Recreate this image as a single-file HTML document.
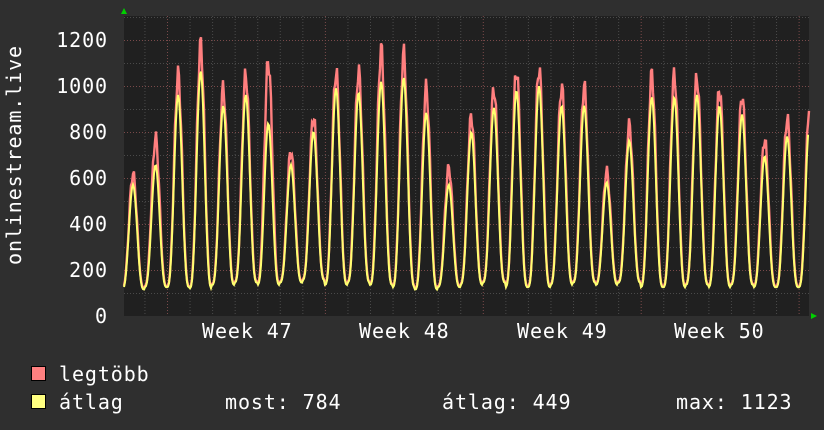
<!DOCTYPE html>
<html><head><meta charset="utf-8"><style>
html,body{margin:0;padding:0;background:#2f2f2f;}
body{width:824px;height:430px;overflow:hidden;position:relative;font-family:"DejaVu Sans Mono","Liberation Mono",monospace;color:#fff;}
.t{position:absolute;font-size:20px;line-height:20px;white-space:pre;letter-spacing:0.9px;}
.yl{position:absolute;right:716px;font-size:20px;line-height:20px;letter-spacing:0.9px;}
.sq{position:absolute;width:13px;height:13px;border:1px solid #000;}
</style></head><body>
<svg id="g" width="824" height="430" style="position:absolute;left:0;top:0">
<rect x="124" y="16" width="685" height="300" fill="#202020"/>
<g id="grid"></g>
<g id="data"></g>
<polygon points="121,14 127,14 124,8" fill="#00d000"/>
<polygon points="811,313 811,319 817,316" fill="#00d000"/>
</svg>
<div class="yl" style="top:30px">1200</div>
<div class="yl" style="top:76px">1000</div>
<div class="yl" style="top:122px">800</div>
<div class="yl" style="top:168px">600</div>
<div class="yl" style="top:214px">400</div>
<div class="yl" style="top:260px">200</div>
<div class="yl" style="top:306px">0</div>
<div class="t" style="top:155px;transform:rotate(-90deg);transform-origin:center;left:-86px;width:200px;text-align:center">onlinestream.live</div>
<div class="t" style="left:202px;top:321px">Week 47</div>
<div class="t" style="left:359px;top:321px">Week 48</div>
<div class="t" style="left:517px;top:321px">Week 49</div>
<div class="t" style="left:674px;top:321px">Week 50</div>
<div class="sq" style="left:31px;top:366px;background:#ff8080"></div>
<div class="sq" style="left:31px;top:394px;background:#ffff80"></div>
<div class="t" style="left:59px;top:364px">legtöbb</div>
<div class="t" style="left:59px;top:392px">átlag</div>
<div class="t" style="left:225px;top:392px">most: 784</div>
<div class="t" style="left:442px;top:392px">átlag: 449</div>
<div class="t" style="left:676px;top:392px">max: 1123</div>
<script>
var ns="http://www.w3.org/2000/svg";
function el(p,n,a){var e=document.createElementNS(ns,n);for(var k in a)e.setAttribute(k,a[k]);p.appendChild(e);return e;}
var G=document.getElementById("grid"),D=document.getElementById("data");
function Y(v){return 316-v*0.23;}
for(var v=100;v<=1300;v+=100){var maj=v%200==0;el(G,"line",{x1:124,x2:809,y1:Y(v)+.5,y2:Y(v)+.5,stroke:maj?"#7a4a4a":"#4a4a4a","stroke-dasharray":"1,2"});}
var dw=157.9/7;
for(var k=-1;k<40;k++){var x=167+dw*k;if(x<124||x>809)continue;var maj=((k%7)+7)%7==0;el(G,"line",{x1:x+.5,x2:x+.5,y1:16,y2:316,stroke:maj?"#7a4a4a":"#4a4a4a","stroke-dasharray":"1,2"});}
var peaks=[620,775,1050,1180,990,1050,1110,720,870,1065,1065,1160,1140,990,645,870,990,1070,1080,1000,1000,630,830,1050,1050,1040,990,960,770,860,930];
var avgp=[600,690,1010,1120,960,1010,880,690,840,1040,1020,1070,1090,930,600,840,950,1030,1050,960,960,610,800,1000,1000,1010,960,920,730,820,900];
var mins=[120,130,130,125,140,150,140,150,160,140,150,140,130,120,130,140,150,130,130,140,150,140,150,130,130,140,130,140,130,130,130];
var rp=[],yp=[];
for(var x=124;x<=809;x+=1){var t=(x-133)/dw;var i=Math.round(t);if(i<0)i=0;if(i>30)i=30;var ph=t-Math.round(t);
var f=Math.pow((1+Math.cos(2*Math.PI*ph))/2,1.6);var j=(Math.sin(x*1.7)*0.05);
var r=mins[i]+(peaks[i]-mins[i])*(f+j*f);var a=mins[i]-5+(avgp[i]-mins[i])*(f*0.95);
if(x>=806){r=Math.min(r,930);a=Math.min(a,784);}
rp.push(x+","+Y(r).toFixed(1));yp.push(x+","+Y(a).toFixed(1));}
el(D,"polyline",{points:rp.join(" "),fill:"none",stroke:"#ff7f7f","stroke-width":2.4});
el(D,"polyline",{points:yp.join(" "),fill:"none",stroke:"#ffff70","stroke-width":2});
</script>
</body></html>
